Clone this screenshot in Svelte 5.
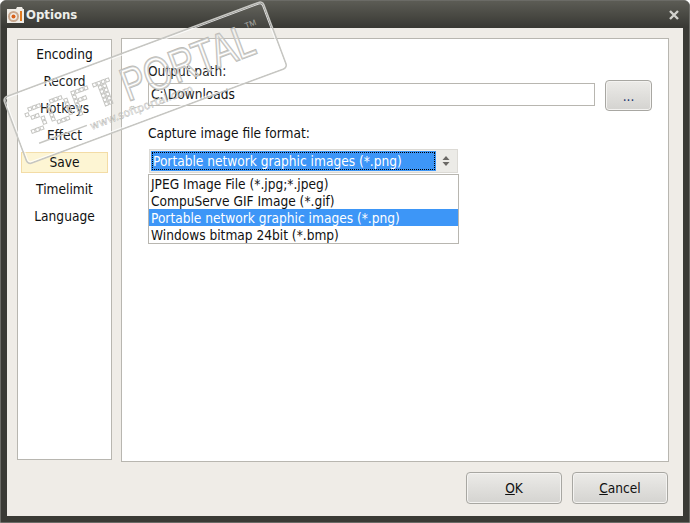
<script>
  const tabs = ['Encoding', 'Record', 'Hotkeys', 'Effect', 'Save', 'Timelimit', 'Language'];
  const formats = ['JPEG Image File (*.jpg;*.jpeg)', 'CompuServe GIF Image (*.gif)', 'Portable network graphic images (*.png)', 'Windows bitmap 24bit (*.bmp)'];
  // dot-matrix logo, one string per row
  const logo = [
    '.###..###..####.####',
    '#....#...#.#.....##.',
    '.##..#...#.###...##.',
    '...#.#...#.#.....##.',
    '...#.#...#.#.....##.',
    '###...###..#.....##.'
  ];
  const dots = [];
  logo.forEach((row, r) => [...row].forEach((ch, c) => {
    if (ch === '#') dots.push({ x: 15 + c * 4.6, y: 18 + r * 4.4 });
  }));
</script>

<div class="window">
  <header class="titlebar">
    <div class="title-left">
      <svg class="appicon" width="17" height="16" viewBox="0 0 17 16">
        <path d="M0 2H9L10 0H15L16 2H17V16H0Z" fill="#efece6" />
        <circle cx="6.5" cy="9.5" r="4.5" fill="none" stroke="#c9a88e" stroke-width="2" />
        <circle cx="6.5" cy="9.5" r="2" fill="#d8601a" />
        <rect x="13" y="4" width="2" height="10" fill="#e07a20" />
      </svg>
      <span class="title">Options</span>
    </div>
    <svg class="close" width="10" height="10" viewBox="0 0 10 10"><path d="M1 1 9 9M9 1 1 9" stroke="#d2d2ce" stroke-width="2.4" /></svg>
  </header>

  <main class="client">
    <div class="panels">
      <nav class="sidebar">
        {#each tabs as tab}
          <div class="tab" class:active={tab === 'Save'}>{tab}</div>
        {/each}
      </nav>
      <section class="page">
        <div class="label">Output path:</div>
        <div class="path-row">
          <div class="input">C:\Downloads</div>
          <button class="btn browse">...</button>
        </div>
        <div class="label second">Capture image file format:</div>
        <div class="combo-wrap">
          <div class="combo">
            <div class="combo-value"><span>Portable network graphic images (*.png)</span></div>
            <div class="spin">
              <svg width="8" height="12" viewBox="0 0 8 12"><path d="M4 1 7.5 5H.5ZM4 11 .5 7h7Z" fill="#6b6965" /></svg>
            </div>
          </div>
          <ul class="list">
            {#each formats as f, i}
              <li class:sel={i === 2}>{f}</li>
            {/each}
          </ul>
        </div>
      </section>
    </div>
    <footer class="actions">
      <button class="btn action"><u>O</u>K</button>
      <button class="btn action"><u>C</u>ancel</button>
    </footer>
  </main>

  <svg class="watermark" width="300" height="190" viewBox="0 0 300 190">
    <g transform="translate(2 97) rotate(-20.5)">
      <rect x="0" y="0" width="277" height="71" rx="4" fill="rgba(255,255,255,.06)" stroke="#c6c6c2" stroke-width="1.6" />
      <rect x="1.5" y="1.5" width="274" height="68" rx="3" fill="none" stroke="rgba(255,255,255,.8)" stroke-width="1" />
      {#each dots as d}
        <rect x={d.x} y={d.y} width="3.4" height="3.4" fill="none" stroke="#c4c4c0" stroke-width="1" />
      {/each}
      <text class="wm-big" transform="translate(116 47) scale(1 1.3)">PORTAL</text>
      <text class="wm-tm" x="252" y="20">TM</text>
      <line x1="18" y1="55" x2="69" y2="55" stroke="#c6c6c2" stroke-width="1.5" />
      <text class="wm-url" x="72" y="61">www.softportal.com</text>
    </g>
  </svg>
</div>

<style>
  :global(body) { margin: 0; background: #fff; }
  .window {
    position: relative;
    width: 690px;
    height: 523px;
    box-sizing: border-box;
    background: #3a3a35;
    border: 1px solid #6b6b66;
    border-radius: 6px 6px 0 0;
    padding: 0 6px 6px;
    display: flex;
    flex-direction: column;
    overflow: hidden;
    font-family: "DejaVu Sans Condensed", "DejaVu Sans", sans-serif;
    font-stretch: condensed;
    font-size: 13.6px;
    color: #111;
  }
  .titlebar {
    height: 27px;
    flex: none;
    display: flex;
    align-items: center;
    justify-content: space-between;
    background: linear-gradient(#5c5c55, #383833);
    margin: 0 -6px;
    padding: 0 10px 0 6px;
  }
  .title-left { display: flex; align-items: center; gap: 2px; }
  .title { color: #eeeeea; font-weight: 700; font-size: 13px; }
  .client {
    flex: 1;
    min-height: 0;
    background: #efece7;
    padding: 10px 14px 0 10px;
    display: flex;
    flex-direction: column;
  }
  .panels { flex: 1; min-height: 0; display: flex; gap: 9px; }
  .sidebar {
    width: 95px;
    box-sizing: border-box;
    background: #fff;
    border: 1px solid #b8b6b0;
    padding: 1px 3px;
    margin: 1px 0 2px;
    text-align: center;
  }
  .tab {
    height: 27px;
    line-height: 27px;
    box-sizing: border-box;
    width: 87px;
  }
  .tab.active {
    height: 21px;
    line-height: 19px;
    margin: 3px 0;
    background: #fdf5d3;
    border: 1px solid #f3dca6;
  }
  .page {
    flex: 1;
    background: #fff;
    border: 1px solid #b8b6b0;
    padding: 24px 16px 0 26px;
  }
  .label { line-height: 16px; }
  .second { margin-top: 14px; }
  .path-row { display: flex; gap: 10px; margin-top: 1px; align-items: flex-start; }
  .input {
    flex: 1;
    height: 23px;
    box-sizing: border-box;
    border: 1px solid #b8b6b0;
    padding: 0 2px;
    line-height: 21px;
    margin-top: 3px;
  }
  .btn {
    border: 1px solid #a8a7a2;
    border-radius: 4px;
    background: linear-gradient(#ecebe8, #d4d3d0);
    box-shadow: inset 0 0 0 1px #f4f3f1;
    font: inherit;
    color: #111;
    padding: 0;
  }
  .browse { width: 47px; height: 31px; color: #14306e; }
  .combo-wrap { width: 311px; margin-top: 8px; }
  .combo {
    height: 24px;
    box-sizing: border-box;
    border: 1px solid #dcdad5;
    background: #ecebe7;
    display: flex;
    padding: 1px;
    margin: 0 1px;
  }
  .combo-value {
    flex: 1;
    background: #3d96f7;
    color: #fff;
    padding: 1px;
  }
  .combo-value span {
    display: block;
    height: 16px;
    line-height: 16px;
    border: 1px dotted #000;
  }
  .spin { width: 20px; display: flex; align-items: center; justify-content: center; }
  .list {
    margin: 1px 0 0;
    padding: 0;
    list-style: none;
    border: 1px solid #b8b6b0;
    background: #fff;
  }
  .list li { height: 17px; line-height: 19px; padding-left: 2px; }
  .list li.sel { background: #3d96f7; color: #fff; }
  .actions {
    height: 54px;
    flex: none;
    display: flex;
    justify-content: flex-end;
    align-items: flex-start;
    gap: 10px;
    padding: 10px 1px 0 0;
    box-sizing: border-box;
  }
  .action { width: 96px; height: 32px; }
  .watermark { position: absolute; left: 0; top: 0; pointer-events: none; }
  .wm-big { font: 400 35.5px "Liberation Sans", sans-serif; fill: #fff; fill-opacity: .3; stroke: #bcbcb8; stroke-width: 1.4; paint-order: stroke; }
  .wm-tm { font: 8px "Liberation Sans", sans-serif; fill: #a9a9a5; }
  .wm-url { font: 400 11px "DejaVu Sans", sans-serif; fill: rgba(255,255,255,.3); stroke: #aeaeaa; stroke-width: .4; }
</style>
